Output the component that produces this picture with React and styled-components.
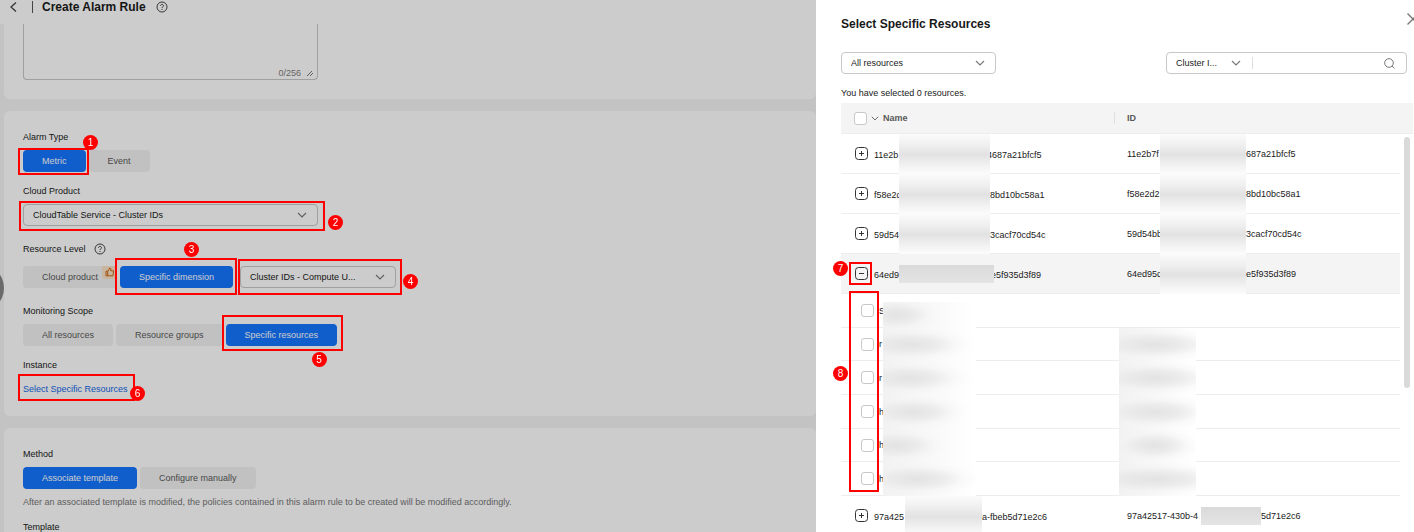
import React from 'react';
import styled, { createGlobalStyle, css } from 'styled-components';

const GlobalStyle = createGlobalStyle`
	* {
		box-sizing: border-box;
	}
	body {
		margin: 0;
		background: #f4f4f4;
		color: #191919;
		font-family: 'Liberation Sans', Arial, sans-serif;
		font-size: 9px;
		line-height: 12px;
	}
	button,
	select,
	input,
	textarea {
		font: inherit;
		color: inherit;
		margin: 0;
	}
	svg {
		display: block;
		flex: none;
	}
`;

const Shell = styled.div`
	display: grid;
	grid-template-columns: minmax(0, 1fr) minmax(598px, 42%);
	height: 100vh;
	overflow: hidden;
`;

const Page = styled.main`
	min-width: 0;
`;

const Overlay = styled.div`
	position: fixed;
	inset: 0;
	z-index: 1;
	background: rgba(0, 0, 0, 0.2);
`;

const Header = styled.header`
	display: flex;
	align-items: flex-start;
	gap: 9px;
	height: 24px;
	padding: 0 9px;
	background: #fff;
`;

const IconButton = styled.button`
	display: flex;
	padding: 0;
	border: none;
	background: none;
	color: ${(props) => props.$color || '#444'};
`;

const BackButton = styled(IconButton)`
	width: 14px;
	padding-top: 2px;
`;

const Divider = styled.span`
	width: 1px;
	height: 12px;
	background: ${(props) => props.$color || '#dfdfdf'};
`;

const HeaderDivider = styled(Divider)`
	margin-top: 1px;
`;

const Title = styled.h1`
	display: flex;
	align-items: center;
	gap: 10px;
	margin: 0;
	font-size: 12px;
	line-height: 14px;
`;

const Cards = styled.div`
	display: flex;
	flex-direction: column;
	gap: 12px;
	padding-left: 4px;
`;

const Card = styled.section`
	padding: 20px 19px;
	border-radius: 6px;
	background: #fff;
	${(props) =>
		props.$cut &&
		css`
			padding-top: 0;
			padding-bottom: 19px;
			border-radius: 0 0 6px 6px;
		`}
`;

const Field = styled.div`
	display: flex;
	flex-direction: column;
	align-items: flex-start;
	gap: ${(props) => (props.$roomy ? 11 : 7)}px;
	margin-bottom: ${(props) => (props.$last ? 0 : props.$loose ? 17 : 13)}px;
`;

const Label = styled.label`
	display: flex;
	align-items: center;
	gap: 8px;
`;

const Row = styled.div`
	display: flex;
	gap: ${(props) => (props.$wide ? 7 : 3)}px;
`;

const Choice = styled.button`
	position: relative;
	height: 22px;
	padding: 0 19px;
	border: none;
	border-radius: 4px;
	white-space: nowrap;
	background: ${(props) => (props.$active ? '#1476ff' : '#f2f2f2')};
	color: ${(props) => (props.$active ? '#fff' : '#595959')};
`;

const Recommended = styled.span`
	position: absolute;
	top: 0;
	right: 0;
	padding: 1px 2px 2px 3px;
	border-radius: 0 4px 0 4px;
	background: #fbe3c8;
	color: #c9640f;
`;

const TextBox = styled.div`
	position: relative;
	width: 295px;
`;

const TextArea = styled.textarea`
	display: block;
	width: 100%;
	height: 56px;
	border: 1px solid #c8c8c8;
	border-top: none;
	border-radius: 0 0 4px 4px;
	background: none;
	resize: none;
`;

const Counter = styled.span`
	position: absolute;
	right: 4px;
	bottom: 1px;
	display: flex;
	align-items: center;
	gap: 5px;
	color: #808080;
`;

const SelectBox = styled.div`
	position: relative;
	width: ${(props) => props.$width}px;
	svg {
		position: absolute;
		top: 8px;
		right: 11px;
		color: #777;
		pointer-events: none;
	}
`;

const Select = styled.select`
	appearance: none;
	width: 100%;
	height: 22px;
	padding: 0 9px;
	border: 1px solid #c8c8c8;
	border-radius: 4px;
	background: none;
	outline: none;
`;

const Link = styled.a`
	line-height: 14px;
	color: #1467e6;
	text-decoration: none;
`;

const Hint = styled.p`
	margin: 0;
	color: #757575;
`;

const FloatingHandle = styled.button`
	position: fixed;
	top: 264px;
	left: -44px;
	width: 48px;
	height: 48px;
	padding: 0;
	border: none;
	border-radius: 50%;
	background: #858585;
`;

/* numbered callouts */
const Marked = styled.div`
	position: relative;
`;

const Frame = styled.span`
	position: absolute;
	z-index: 2;
	inset: ${(props) => props.$inset};
	width: ${(props) => props.$width};
	height: ${(props) => props.$height};
	border: 2px solid #fe0000;
	pointer-events: none;
`;

const Badge = styled.span`
	position: absolute;
	left: ${(props) => props.$x};
	top: ${(props) => props.$y};
	display: grid;
	place-items: center;
	width: 15px;
	height: 15px;
	border-radius: 50%;
	background: #fe0000;
	color: #fff;
	font-size: 10px;
`;

/* drawer */
const Drawer = styled.aside`
	position: relative;
	z-index: 3;
	display: flex;
	flex-direction: column;
	min-width: 0;
	padding-left: 25px;
	background: #fff;
`;

const DrawerHead = styled.div`
	display: flex;
	justify-content: space-between;
	height: 52px;
	padding-top: 12px;
	overflow: hidden;
`;

const DrawerTitle = styled.h2`
	margin: 0;
	padding-top: 5px;
	font-size: 12px;
	line-height: 14px;
`;

const CloseButton = styled(IconButton)`
	width: 8px;
`;

const Filters = styled.div`
	display: flex;
	justify-content: space-between;
	padding-right: 7px;
`;

const SearchBox = styled.div`
	display: flex;
	align-items: center;
	width: 241px;
	height: 22px;
	border: 1px solid #c8c8c8;
	border-radius: 4px;
	padding-right: 11px;
	color: #777;
	${Select} {
		border: none;
		height: 20px;
		color: #191919;
	}
	${SelectBox} svg {
		top: 7px;
	}
`;

const SearchInput = styled.input`
	flex: 1;
	min-width: 0;
	border: none;
	background: none;
	outline: none;
`;

const Selected = styled.p`
	margin: 0;
	padding: 13px 0 4px;
`;

const TableBox = styled.div`
	position: relative;
	margin-right: 1px;
`;

const ScrollThumb = styled.span`
	position: absolute;
	top: 34px;
	right: 3px;
	width: 6px;
	height: 251px;
	border-radius: 3px;
	background: #dadada;
`;

const Table = styled.table`
	width: 100%;
	table-layout: fixed;
	border-collapse: separate;
	border-spacing: 0;
	th,
	td {
		padding: 0;
		text-align: left;
	}
	thead th {
		background: #f4f4f4;
		color: #595959;
		border-bottom: 1px solid #ededed;
	}
`;

const NameCol = styled.col`
	width: 273px;
`;

const GutterCol = styled.col`
	width: 13px;
`;

const Cell = styled.div`
	display: flex;
	align-items: center;
	height: ${(props) => props.$height || 39}px;
	padding-left: ${(props) => props.$pad || 0}px;
	white-space: nowrap;
`;

const HeadCell = styled(Cell)`
	height: 30px;
	gap: ${(props) => props.$gap || 4}px;
`;

const BodyRow = styled.tr`
	td {
		position: relative;
		border-bottom: 1px solid #ededed;
		background: ${(props) => (props.$open ? '#f4f4f4' : '#fff')};
	}
`;

const Checkbox = styled.input`
	appearance: none;
	flex: none;
	width: 13px;
	height: 13px;
	border: 1px solid #c8c8c8;
	border-radius: 3px;
	background: #fff;
`;

const Toggle = styled(IconButton)`
	color: #333;
`;

const Prefix = styled.span`
	flex: none;
	width: ${(props) => props.$width}px;
	padding-top: ${(props) => (props.$low ? 3 : 0)}px;
`;

const Suffix = styled.span`
	padding-top: ${(props) => (props.$low ? 3 : 0)}px;
	margin-left: ${(props) => (props.$tucked ? -3 : 0)}px;
`;

const Redacted = styled.span`
	position: relative;
	flex: none;
	align-self: ${(props) => (props.$short ? 'center' : 'stretch')};
	width: ${(props) => props.$width}px;
	height: ${(props) => (props.$short ? '18px' : 'auto')};
	margin-bottom: ${(props) => (props.$short ? 0 : -1)}px;
	background: ${(props) =>
		props.$short
			? 'linear-gradient(#dadada, #e4e4e4)'
			: 'linear-gradient(#fbfbfb, #efefef 28%, #e2e2e2 52%, #ececec 68%, #fcfcfc)'};
`;

const ChildRedacted = styled(Redacted)`
	margin-top: ${(props) => (props.$first ? 8 : 0)}px;
	background: ${(props) => css`
		radial-gradient(
			${props.$reach}px 17px at ${props.$center}px 50%,
			#e3e3e3,
			rgba(231, 231, 231, 0.75) 40%,
			rgba(240, 240, 240, 0.3) 72%,
			rgba(248, 248, 248, 0)
		),
		linear-gradient(90deg, #f2f2f2, #f9f9f9 55%, #fff)
	`};
`;

const ChevronDown = ({ size = 10 }) => (
	<svg width={size} height={size * 0.6} viewBox="0 0 10 6" fill="none" stroke="currentColor">
		<path d="M1 1l4 4 4-4" strokeWidth="1.1" />
	</svg>
);

const HelpIcon = () => (
	<svg width="12" height="12" viewBox="0 0 12 12" fill="none" stroke="#444" strokeWidth="1">
		<circle cx="6" cy="6" r="5" />
		<path d="M4.5 4.9c0-2 3-2 3 0 0 1-1.5 1-1.5 2.2M6 8v1" />
	</svg>
);

const ThumbIcon = () => (
	<svg width="10" height="10" viewBox="0 0 10 10" fill="none" stroke="currentColor">
		<path d="M1 4.3h1.7v4.5H1zM2.7 4.5L4.8 1c1.2 0 1.2 1 .8 2.8h3L8 8.8H2.7" />
	</svg>
);

const ToggleIcon = ({ open }) => (
	<svg width="13" height="13" viewBox="0 0 13 13" fill="none" stroke="currentColor">
		<rect x="0.5" y="0.5" width="12" height="12" rx="3" />
		<path d={open ? 'M4 6.5h5' : 'M4 6.5h5M6.5 4v5'} />
	</svg>
);

const Mark = ({ n, inset, width, height, x, y }) => (
	<Frame $inset={inset} $width={width} $height={height}>
		<Badge $x={x} $y={y}>
			{n}
		</Badge>
	</Frame>
);

const Dropdown = ({ id, label, value, width }) => (
	<SelectBox $width={width}>
		<Select id={id} aria-label={label} defaultValue={value}>
			<option>{value}</option>
		</Select>
		<ChevronDown />
	</SelectBox>
);

const clusters = [
	{ name: ['11e2b', 91, '4687a21bfcf5'], id: ['11e2b7f', 86, '687a21bfcf5'], tucked: true },
	{ name: ['f58e2d', 91, '8bd10bc58a1'], id: ['f58e2d2', 86, '8bd10bc58a1'] },
	{ name: ['59d54', 91, '3cacf70cd54c'], id: ['59d54bb', 86, '3cacf70cd54c'] },
	{
		name: ['64ed9', 95, 'e5f935d3f89'],
		id: ['64ed95d', 86, 'e5f935d3f89'],
		tucked: true,
		open: true,
	},
];

const nodes = [
	{ letter: 'S', center: 14, reach: 44, height: 33 },
	{ letter: 'r', center: 28, reach: 64, height: 32, id: 74 },
	{ letter: 'r', center: 26, reach: 62, height: 33, id: 70 },
	{ letter: 'h', center: 30, reach: 56, height: 33, id: 64 },
	{ letter: 'h', center: 14, reach: 50, height: 32, id: 46 },
	{ letter: 'h', center: 34, reach: 64, height: 33, id: 90 },
];

const ClusterRow = ({ name, id, tucked, open, lead = 25, idLead = 33, short }) => (
	<BodyRow $open={open}>
		<td>
			<Cell $pad={14}>
				<Marked>
					<Toggle aria-label={open ? 'Collapse' : 'Expand'}>
						<ToggleIcon open={open} />
					</Toggle>
					{open && <Mark n={7} inset="-5px -4px -5px -6px" x="-18px" y="-3px" />}
				</Marked>
				<Cell $pad={6}>
					<Prefix $width={lead} $low>
						{name[0]}
					</Prefix>
					<Redacted $width={name[1]} $short={open} />
					<Suffix $low $tucked={tucked}>
						{name[2]}
					</Suffix>
				</Cell>
			</Cell>
		</td>
		<td>
			<Cell $pad={13}>
				<Prefix $width={idLead}>{id[0]}</Prefix>
				<Redacted $width={id[1]} $short={short} />
				<Suffix>{id[2]}</Suffix>
			</Cell>
		</td>
	</BodyRow>
);

const ResourceTable = () => (
	<TableBox>
		<Table>
			<colgroup>
				<NameCol />
				<col />
				<GutterCol />
			</colgroup>
			<thead>
				<tr>
					<th>
						<HeadCell $pad={13}>
							<Checkbox type="checkbox" aria-label="Select all" />
							<ChevronDown size={8} />
							Name
						</HeadCell>
					</th>
					<th>
						<HeadCell $gap={12}>
							<Divider />
							ID
						</HeadCell>
					</th>
					<th />
				</tr>
			</thead>
			<tbody>
				{clusters.map((cluster) => (
					<ClusterRow key={cluster.id[0]} {...cluster} />
				))}
				{nodes.map((node, i) => (
					<BodyRow key={i}>
						<td>
							{i === 0 && (
								<Mark
									n={8}
									inset="-3px auto auto 8px"
									width="30px"
									height="201px"
									x="-18px"
									y="73px"
								/>
							)}
							<Cell $pad={20} $height={node.height}>
								<Checkbox type="checkbox" aria-label={`Select node ${i + 1}`} />
								<Cell $pad={5} $height={node.height}>
									<Prefix $width={4}>{node.letter}</Prefix>
									<ChildRedacted
										$width={93}
										$center={node.center}
										$reach={node.reach}
										$first={i === 0}
									/>
								</Cell>
							</Cell>
						</td>
						<td>
							<Cell $pad={5} $height={node.height}>
								{node.id && (
									<ChildRedacted $width={77} $center={36} $reach={node.id} />
								)}
							</Cell>
						</td>
					</BodyRow>
				))}
				<ClusterRow
					name={['97a425', 77, 'a-fbeb5d71e2c6']}
					id={['97a42517-430b-4', 60, '5d71e2c6']}
					lead={31}
					idLead={74}
					short
				/>
			</tbody>
		</Table>
		<ScrollThumb />
	</TableBox>
);

const AlarmForm = () => (
	<Cards>
		<Card $cut>
			<TextBox>
				<TextArea aria-label="Description" />
				<Counter>
					0/256
					<svg width="8" height="8" viewBox="0 0 8 8" stroke="#777" strokeWidth="1">
						<path d="M1 7l5-5M4 7l3-3" />
					</svg>
				</Counter>
			</TextBox>
		</Card>
		<Card>
			<Field>
				<Label as="span">Alarm Type</Label>
				<Row>
					<Marked>
						<Choice $active>Metric</Choice>
						<Mark n={1} inset="-2px -3px -3px -5px" x="63px" y="-15px" />
					</Marked>
					<Choice>Event</Choice>
				</Row>
			</Field>
			<Field $loose>
				<Label htmlFor="product">Cloud Product</Label>
				<Marked>
					<Dropdown id="product" value="CloudTable Service - Cluster IDs" width={295} />
					<Mark n={2} inset="-3px -7px -5px -4px" x="307px" y="12px" />
				</Marked>
			</Field>
			<Field $loose $roomy>
				<Label as="span">
					Resource Level <HelpIcon />
				</Label>
				<Row $wide>
					<Row>
						<Choice>
							Cloud product
							<Recommended>
								<ThumbIcon />
							</Recommended>
						</Choice>
						<Marked>
							<Choice $active>Specific dimension</Choice>
							<Mark n={3} inset="-8px -4px -7px -5px" x="67px" y="-18px" />
						</Marked>
					</Row>
					<Marked>
						<Dropdown label="Dimension" value="Cluster IDs - Compute U..." width={156} />
						<Mark n={4} inset="-7px -6px -7px -2px" x="163px" y="13px" />
					</Marked>
				</Row>
			</Field>
			<Field>
				<Label as="span">Monitoring Scope</Label>
				<Row>
					<Choice>All resources</Choice>
					<Choice>Resource groups</Choice>
					<Marked>
						<Choice $active>Specific resources</Choice>
						<Mark n={5} inset="-9px -6px -5px -4px" x="88px" y="35px" />
					</Marked>
				</Row>
			</Field>
			<Field $last $roomy>
				<Label as="span">Instance</Label>
				<Marked>
					<Link href="#resources">Select Specific Resources</Link>
					<Mark n={6} inset="-8px -7px -5px -5px" x="110px" y="10px" />
				</Marked>
			</Field>
		</Card>
		<Card>
			<Field>
				<Label as="span">Method</Label>
				<Row>
					<Choice $active>Associate template</Choice>
					<Choice>Configure manually</Choice>
				</Row>
				<Hint>
					After an associated template is modified, the policies contained in this alarm rule
					to be created will be modified accordingly.
				</Hint>
			</Field>
			<Field $last>
				<Label as="span">Template</Label>
			</Field>
		</Card>
	</Cards>
);

const App = () => (
	<>
		<GlobalStyle />
		<Shell>
			<Page>
				<Header>
					<BackButton aria-label="Back">
						<svg width="8" height="10" viewBox="0 0 8 10" fill="none" stroke="currentColor">
							<path d="M7 0.5L2 5l5 4.5" strokeWidth="1.3" />
						</svg>
					</BackButton>
					<HeaderDivider $color="#555" />
					<Title>
						Create Alarm Rule <HelpIcon />
					</Title>
				</Header>
				<AlarmForm />
				<FloatingHandle aria-label="Open menu" />
			</Page>
			<Overlay />
			<Drawer>
				<DrawerHead>
					<DrawerTitle>Select Specific Resources</DrawerTitle>
					<CloseButton aria-label="Close" $color="#777">
						<svg width="14" height="14" viewBox="0 0 14 14" stroke="currentColor">
							<path d="M1.5 1.5l11 11M12.5 1.5l-11 11" strokeWidth="1.4" />
						</svg>
					</CloseButton>
				</DrawerHead>
				<Filters>
					<Dropdown label="Resource filter" value="All resources" width={155} />
					<SearchBox>
						<Dropdown label="Search by" value="Cluster I..." width={85} />
						<Divider />
						<SearchInput type="search" aria-label="Search" />
						<svg width="11" height="11" viewBox="0 0 11 11" fill="none" stroke="currentColor">
							<circle cx="5" cy="5" r="4.3" />
							<path d="M8 8l2.5 2.5" />
						</svg>
					</SearchBox>
				</Filters>
				<Selected>You have selected 0 resources.</Selected>
				<ResourceTable />
			</Drawer>
		</Shell>
	</>
);

export default App;
